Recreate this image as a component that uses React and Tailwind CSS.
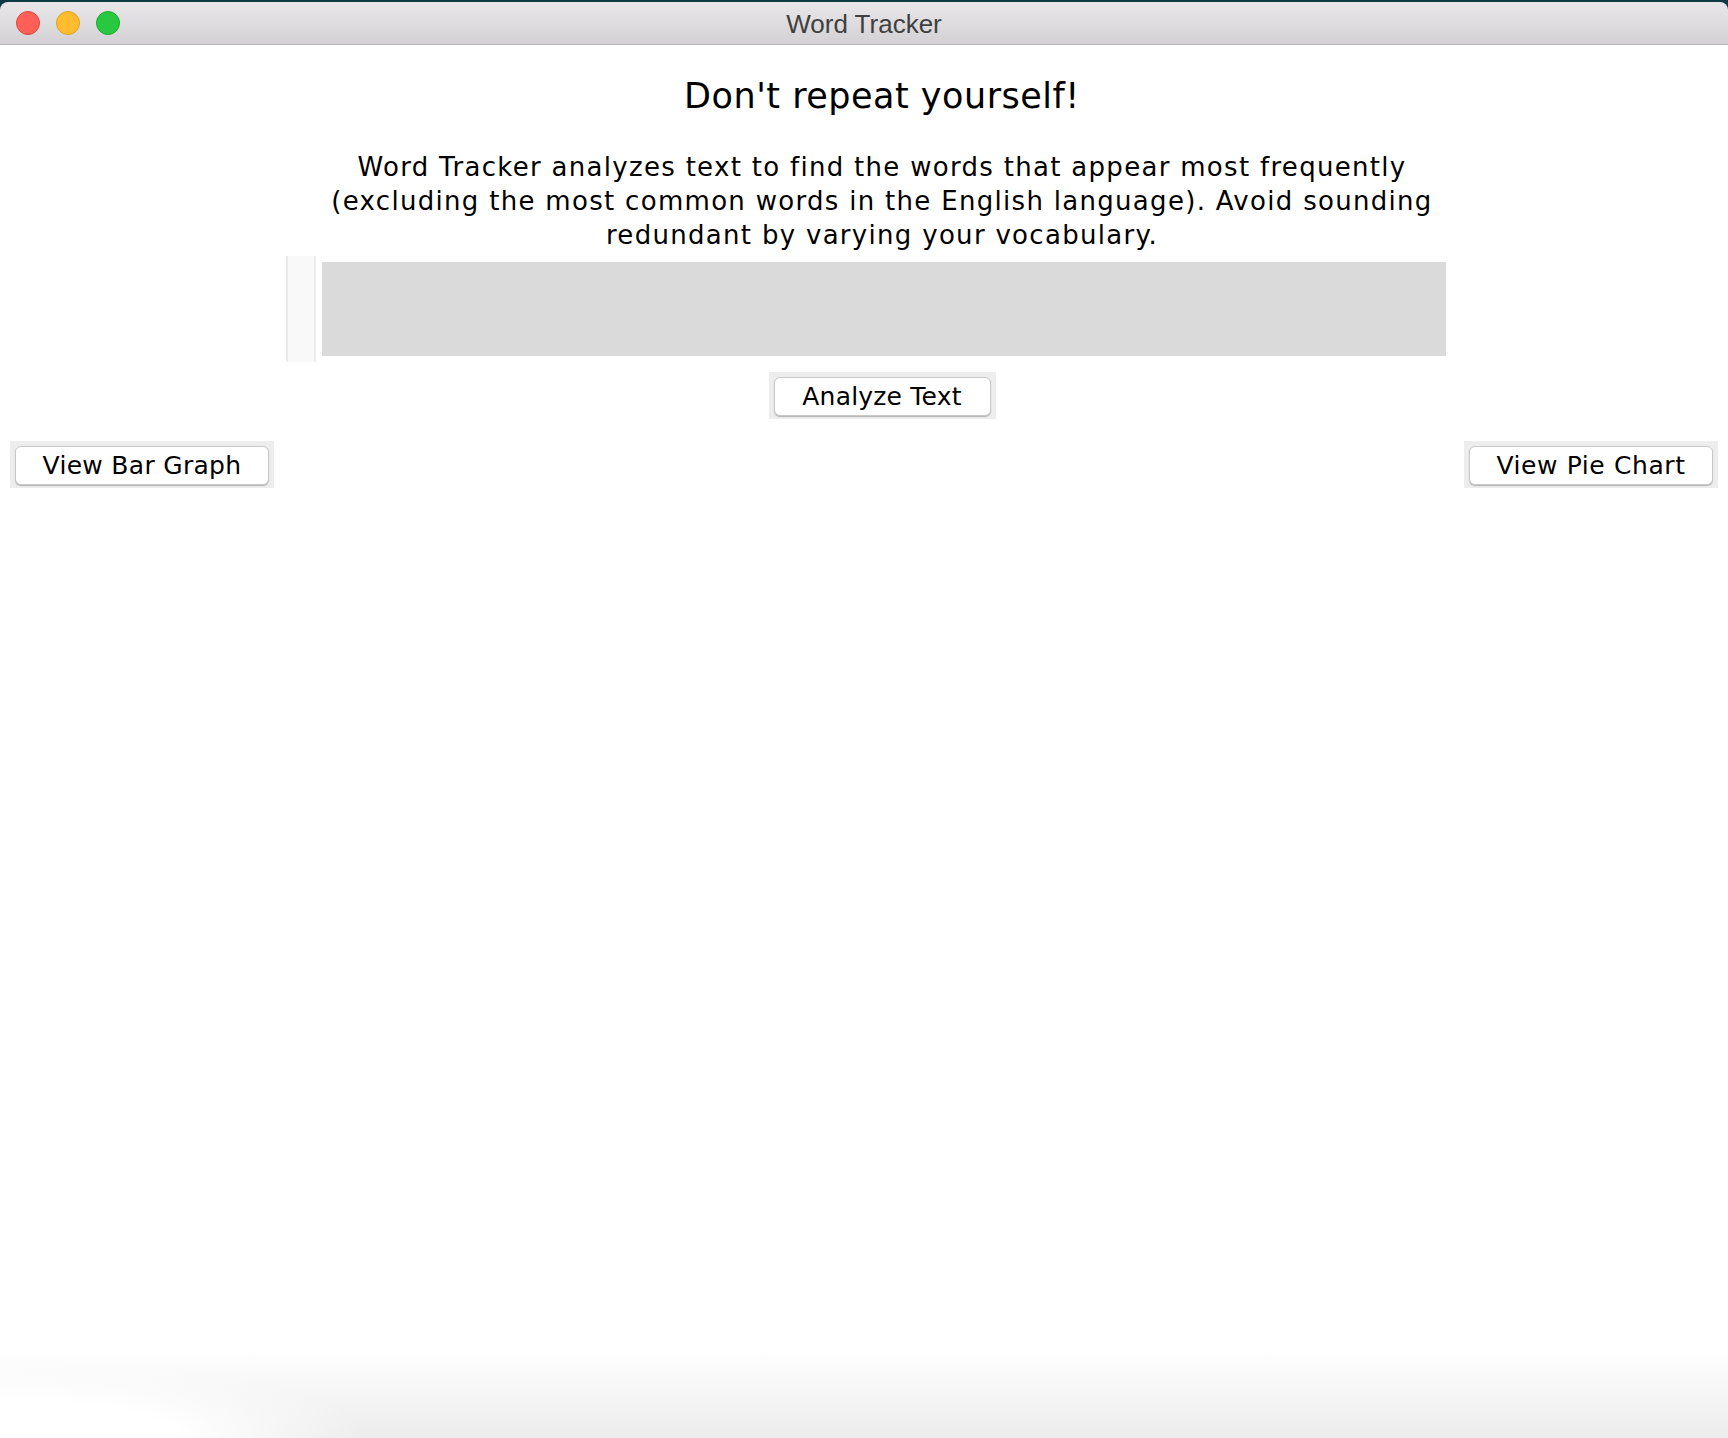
import React from 'react';

function MacButton({ label, innerW, track }) {
  return (
    <div className="bg-[#ededed] px-[5px] pt-[5px] pb-[3px]">
      <button
        className={`${innerW} ${track} h-[39px] bg-white rounded-[6px] border border-[#c8c8c8] shadow-[0_1px_1px_rgba(0,0,0,0.25)] text-[25px] leading-[38px] text-black`}
        style={{ fontFamily: '"DejaVu Sans", Verdana, sans-serif' }}
      >
        {label}
      </button>
    </div>
  );
}

export default function App() {
  return (
    <div className="relative w-full h-[1438px] bg-white overflow-hidden" style={{ fontFamily: '"DejaVu Sans", Verdana, sans-serif' }}>
      {/* title bar */}
      <div className="bg-[#0e3a46] pt-[2px]">
        <div className="relative h-[43px] rounded-t-[8px] bg-gradient-to-b from-[#e9e7e9] to-[#d3d1d3] border-b border-[#b5b5b5] flex items-center pl-[16px] gap-[16px]">
          <span className="w-[24px] h-[24px] rounded-full bg-[#fe5f57] border border-[#e1463f]" />
          <span className="w-[24px] h-[24px] rounded-full bg-[#febc2e] border border-[#dfa123]" />
          <span className="w-[24px] h-[24px] rounded-full bg-[#28c840] border border-[#1dab2c]" />
          <div
            className="absolute inset-0 flex items-center justify-center text-[26px] text-[#404040] pt-[3px]"
            style={{ fontFamily: '"Liberation Sans", Arial, sans-serif' }}
          >
            Word Tracker
          </div>
        </div>
      </div>

      {/* content */}
      <div className="flex flex-col items-center">
        <h1 className="mt-[31px] text-[35px] leading-[40px] tracking-[0.5px] text-black pl-[36px]">Don't repeat yourself!</h1>
        <p className="mt-[34px] whitespace-nowrap text-center text-[26px] leading-[34px] tracking-[1.3px] text-black pl-[36px]">
          Word Tracker analyzes text to find the words that appear most frequently
          <br />
          (excluding the most common words in the English language). Avoid sounding
          <br />
          redundant by varying your vocabulary.
        </p>
        <div className="mt-[4px] flex items-center gap-[6px] pl-[4px]">
          <div className="w-[30px] h-[106px] bg-[#f9f9f9] border-x-2 border-[#ebebeb]" />
          <div className="w-[1124px] h-[94px] bg-[#dadada]" />
        </div>
        <div className="mt-[10px] pl-[36px]">
          <MacButton label="Analyze Text" innerW="w-[217px]" track="tracking-[0.2px]" />
        </div>
      </div>

      <div className="mt-[22px] px-[10px] flex justify-between">
        <MacButton label="View Bar Graph" innerW="w-[254px]" track="tracking-[0.3px]" />
        <MacButton label="View Pie Chart" innerW="w-[244px]" track="tracking-[0.6px]" />
      </div>

      {/* bottom window shade */}
      <div className="absolute left-0 right-0 bottom-0 h-[90px] bg-gradient-to-b from-white/0 to-[#ececec]" />
      <div className="absolute left-0 bottom-0 w-[420px] h-[90px] bg-[radial-gradient(ellipse_at_left_bottom,white_30%,rgba(255,255,255,0)_62%)]" />
    </div>
  );
}
